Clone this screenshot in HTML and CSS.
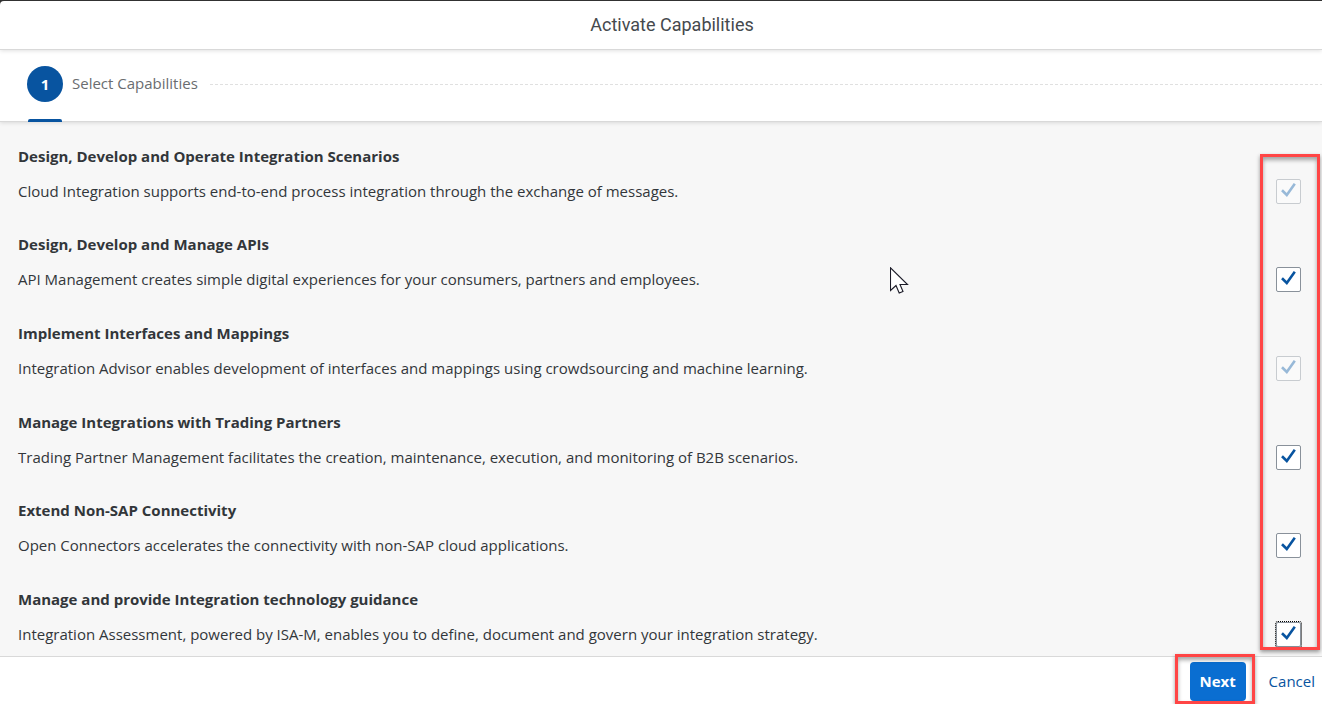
FILE: index.html
```
<!DOCTYPE html>
<html lang="en">
<head>
<meta charset="utf-8">
<meta name="viewport" content="width=device-width, initial-scale=1">
<title>Activate Capabilities</title>
<link rel="stylesheet" href="styles.css">
</head>
<body>
<div class="dialog">
  <header class="dialog-header"><h1 class="dialog-title">Activate Capabilities</h1></header>
  <nav class="steps" aria-label="Progress">
    <button class="step" type="button" aria-current="step"><span class="step-number">1</span><span class="step-label">Select Capabilities</span></button>
    <span class="step-line"></span>
  </nav>
  <main class="capabilities">
    <div class="capability">
      <label class="capability-text" for="c1"><strong class="capability-name">Design, Develop and Operate Integration Scenarios</strong><span>Cloud Integration supports end-to-end process integration through the exchange of messages.</span></label>
      <span class="check"><input id="c1" type="checkbox" checked disabled><svg viewBox="0 0 25 25"><path d="M6 11.3 L10.8 16 L18.8 4.8"/></svg></span>
    </div>
    <div class="capability">
      <label class="capability-text" for="c2"><strong class="capability-name">Design, Develop and Manage APIs</strong><span>API Management creates simple digital experiences for your consumers, partners and employees.</span></label>
      <span class="check"><input id="c2" type="checkbox" checked><svg viewBox="0 0 25 25"><path d="M6 11.3 L10.8 16 L18.8 4.8"/></svg></span>
    </div>
    <div class="capability">
      <label class="capability-text" for="c3"><strong class="capability-name">Implement Interfaces and Mappings</strong><span>Integration Advisor enables development of interfaces and mappings using crowdsourcing and machine learning.</span></label>
      <span class="check"><input id="c3" type="checkbox" checked disabled><svg viewBox="0 0 25 25"><path d="M6 11.3 L10.8 16 L18.8 4.8"/></svg></span>
    </div>
    <div class="capability">
      <label class="capability-text" for="c4"><strong class="capability-name">Manage Integrations with Trading Partners</strong><span>Trading Partner Management facilitates the creation, maintenance, execution, and monitoring of B2B scenarios.</span></label>
      <span class="check"><input id="c4" type="checkbox" checked><svg viewBox="0 0 25 25"><path d="M6 11.3 L10.8 16 L18.8 4.8"/></svg></span>
    </div>
    <div class="capability">
      <label class="capability-text" for="c5"><strong class="capability-name">Extend Non-SAP Connectivity</strong><span>Open Connectors accelerates the connectivity with non-SAP cloud applications.</span></label>
      <span class="check"><input id="c5" type="checkbox" checked><svg viewBox="0 0 25 25"><path d="M6 11.3 L10.8 16 L18.8 4.8"/></svg></span>
    </div>
    <div class="capability">
      <label class="capability-text" for="c6"><strong class="capability-name">Manage and provide Integration technology guidance</strong><span>Integration Assessment, powered by ISA-M, enables you to define, document and govern your integration strategy.</span></label>
      <span class="check check-focused"><input id="c6" type="checkbox" checked><svg viewBox="0 0 25 25"><path d="M6 11.3 L10.8 16 L18.8 4.8"/></svg></span>
    </div>
    <span class="highlight highlight-checks"></span>
    <svg class="pointer" viewBox="0 0 20 28" aria-hidden="true"><path d="M.5 .8 V23.5 L6 18.5 L9.2 26 L13 24.5 L10 17.5 H17.5 Z"/></svg>
  </main>
  <footer class="dialog-footer">
    <span class="next-wrap"><button class="button button-primary" type="button">Next</button><span class="highlight highlight-next"></span></span>
    <button class="button button-plain" type="button">Cancel</button>
  </footer>
</div>
</body>
</html>
```
FILE: styles.css
```
* { box-sizing: border-box; }
body {
  margin: 0;
  background: #333;
  color: #32363a;
  font: 15px/24px "Open Sans", "Noto Sans", sans-serif;
}
button { font: inherit; border: 0; background: none; padding: 0; cursor: pointer; }
.dialog {
  display: flex;
  flex-direction: column;
  min-height: 100vh;
  border-top: 1px solid #333;
}
.dialog-header {
  z-index: 2;
  display: flex;
  align-items: center;
  justify-content: center;
  height: 49px;
  padding-left: 22px;
  background: #fff;
  border-bottom: 1px solid #d9d9d9;
  border-top-left-radius: 4px;
  box-shadow: 0 1px 4px rgba(0, 0, 0, .12);
}
.dialog-title { margin: 0; font: 400 18px/24px Roboto, sans-serif; color: #45494d; }
.steps {
  z-index: 1;
  display: flex;
  height: 72px;
  padding-left: 27px;
  background: #fff;
  border-bottom: 1px solid #d9d9d9;
  box-shadow: 0 1px 4px rgba(0, 0, 0, .12);
}
.step { position: relative; display: flex; align-items: center; gap: 9px; padding-bottom: 3px; color: #6a6d70; }
.step::after {
  content: "";
  position: absolute;
  left: 1px;
  bottom: -1px;
  width: 34px;
  height: 3px;
  background: #0854a0;
  border-radius: 2px 2px 0 0;
}
.step-number {
  display: grid;
  place-items: center;
  width: 36px;
  height: 36px;
  border-radius: 50%;
  background: #0854a0;
  color: #fff;
  font-weight: 700;
}
.step-label { padding-bottom: 2px; }
.step-line {
  flex: 1;
  height: 1px;
  margin: 34px 0 0 12px;
  background: repeating-linear-gradient(90deg, #e0e0e0 0 3px, #fff 3px 5px);
}
.capabilities {
  position: relative;
  flex: 1;
  display: grid;
  grid-auto-rows: 1fr;
  padding-top: 2px;
  background: #f7f7f7;
}
.capability {
  display: flex;
  justify-content: space-between;
  align-items: flex-end;
  gap: 16px;
  padding: 16px 21px 9px 18px;
}
.capability-text { display: flex; flex-direction: column; gap: 11px; padding-bottom: 1px; }
.capability-name { font-weight: 700; }
.check { position: relative; flex: none; width: 25px; height: 25px; }
.check input {
  display: block;
  appearance: none;
  width: 100%;
  height: 100%;
  margin: 0;
  background: #fff;
  border: 1px solid #89919a;
  border-radius: 2px;
}
.check svg { position: absolute; inset: 0; fill: none; stroke: #0854a0; stroke-width: 2.6; pointer-events: none; }
.check input:not(:checked) + svg { visibility: hidden; }
.check input:disabled { border-color: #c8ccd0; background: #fafafa; }
.check input:disabled + svg { stroke: #98b9d8; }
.check-focused input { outline: 1px dotted #000; }
.highlight {
  position: absolute;
  border: 3px solid #ff4545;
  box-shadow: 0 2px 4px rgba(0, 0, 0, .4), inset 0 3px 4px rgba(0, 0, 0, .35);
  pointer-events: none;
}
.highlight-checks { top: 32px; right: 2px; bottom: 6px; width: 60px; }
.pointer {
  position: absolute;
  left: 890px;
  top: 145px;
  width: 20px;
  height: 28px;
  fill: #fff;
  stroke: #1c1c28;
  stroke-width: 1.1;
}
.dialog-footer {
  display: flex;
  justify-content: flex-end;
  gap: 23px;
  height: 48px;
  padding: 5px 7px 3px;
  background: #fff;
  border-top: 1px solid #d9d9d9;
}
.next-wrap { position: relative; display: flex; }
.highlight-next { inset: -8px -9px -3px -15px; }
.button { padding-bottom: 2px; border-radius: 4px; color: #0854a0; }
.button-primary { width: 56px; background: #0a6ed1; color: #fff; font-weight: 700; }
```
